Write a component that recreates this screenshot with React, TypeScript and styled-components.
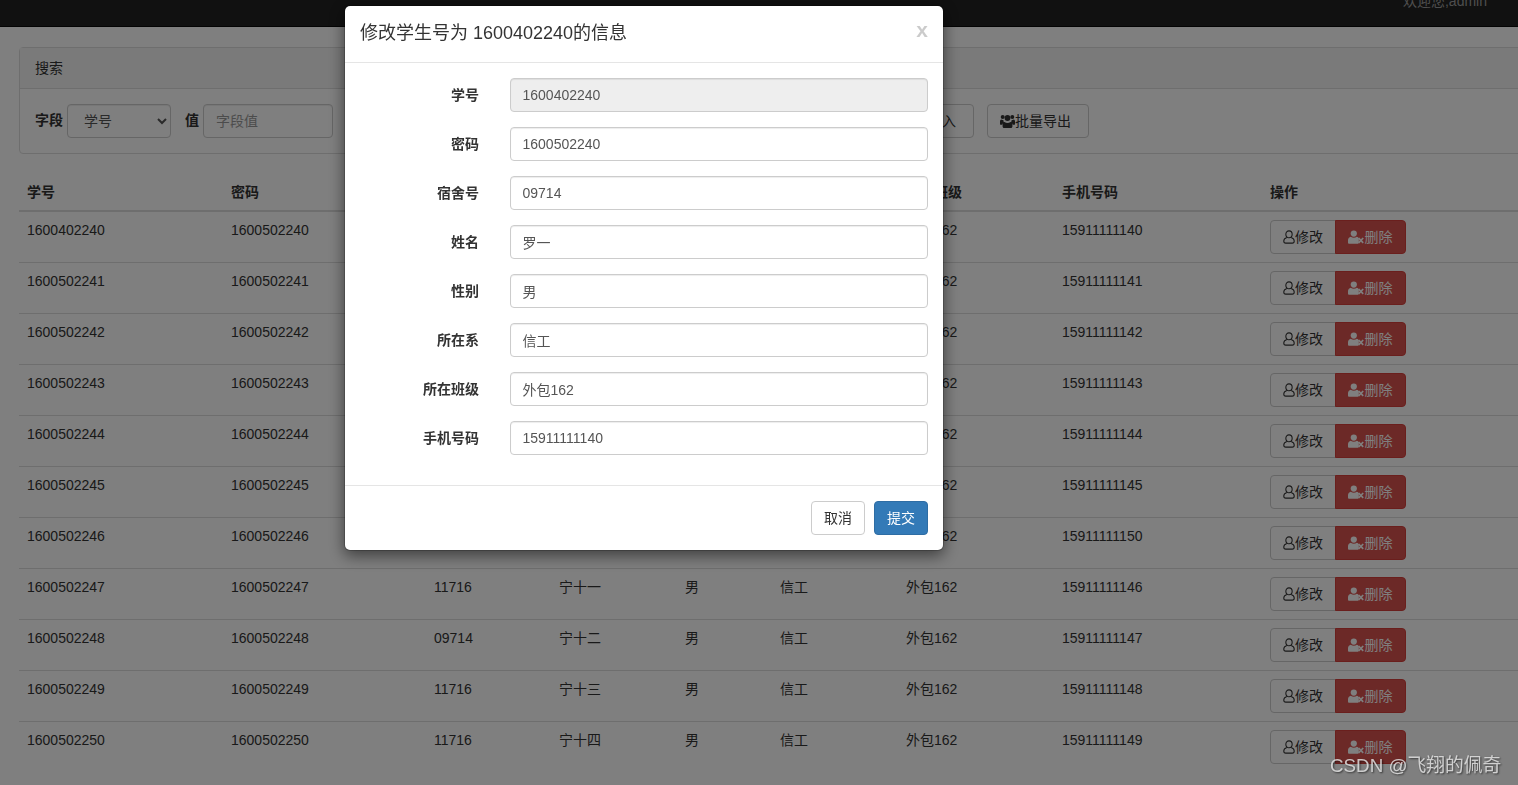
import React from "react";
import styled, { createGlobalStyle, css } from "styled-components";

const GlobalStyle = createGlobalStyle`
  html, body {
    margin: 0;
    height: 100%;
    overflow: hidden;
    background: #fff;
  }
  body {
    font-family: "Liberation Sans", "Noto Sans CJK SC", sans-serif;
    font-size: 14px;
    line-height: 20px;
    color: #333;
  }
  * {
    box-sizing: border-box;
  }
`;

const Navbar = styled.div`
  height: 27px;
  background: #222;
  border-bottom: 1px solid #080808;
  display: flex;
  justify-content: flex-end;
  padding-right: 31px;
  overflow: hidden;
`;

const Welcome = styled.span`
  color: #9d9d9d;
  margin-top: -9px;
  height: 20px;
`;

const Content = styled.div`
  margin: 20px -10px 0 19px;
`;

const Panel = styled.div`
  border: 1px solid #ddd;
  border-radius: 4px;
  margin-bottom: 20px;
`;

const PanelHeading = styled.div`
  background: #f5f5f5;
  border-bottom: 1px solid #ddd;
  padding: 10px 15px;
`;

const SearchForm = styled.form`
  display: flex;
  align-items: center;
  padding: 15px;
`;

const FieldLabel = styled.label`
  font-weight: 700;
  margin-right: 4px;
  margin-bottom: 2px;
`;

const controlStyle = css`
  height: 34px;
  padding: 6px 12px;
  font: inherit;
  color: #555;
  background: #fff;
  border: 1px solid #ccc;
  border-radius: 4px;
  box-shadow: inset 0 1px 1px rgba(0, 0, 0, 0.075);
  outline: none;
  &::placeholder {
    color: #999;
  }
`;

const FieldSelect = styled.select`
  ${controlStyle}
  width: 104px;
  margin-right: 14px;
`;

const FieldInput = styled.input`
  ${controlStyle}
  width: 130px;
`;

const Button = styled.button<{ $kind?: "default" | "primary" | "danger" }>`
  height: 34px;
  padding: 6px 12px;
  font: inherit;
  white-space: nowrap;
  display: inline-flex;
  align-items: center;
  border-radius: 4px;
  border: 1px solid
    ${(p) =>
      p.$kind === "primary" ? "#2e6da4" : p.$kind === "danger" ? "#d43f3a" : "#ccc"};
  background: ${(p) =>
    p.$kind === "primary" ? "#337ab7" : p.$kind === "danger" ? "#d9534f" : "#fff"};
  color: ${(p) => (p.$kind === "primary" || p.$kind === "danger" ? "#fff" : "#333")};
`;

const ToolButton = styled(Button)`
  margin-left: 13px;
`;

const BulkButton = styled(ToolButton)`
  padding-right: 17px;
`;

const ImportButton = styled(BulkButton)`
  margin-left: 472px;
`;

const ButtonGroup = styled.div`
  display: flex;
  ${Button}:first-child {
    border-radius: 4px 0 0 4px;
  }
  ${Button}:last-child {
    border-radius: 0 4px 4px 0;
    margin-left: -1px;
  }
`;

const Table = styled.table`
  width: 100%;
  table-layout: fixed;
  border-collapse: collapse;
`;

const Th = styled.th<{ $w: number }>`
  width: ${(p) => p.$w}px;
  padding: 8px;
  text-align: left;
  font-weight: 700;
  border-bottom: 2px solid #ddd;
`;

const Td = styled.td`
  padding: 8px;
  height: 50px;
  vertical-align: top;
  border-top: 1px solid #ddd;
  tbody tr:first-child & {
    border-top: 0;
  }
`;

const Backdrop = styled.div`
  position: fixed;
  inset: 0;
  background: rgba(0, 0, 0, 0.5);
`;

const Modal = styled.div`
  position: fixed;
  top: 5px;
  left: 344px;
  width: 600px;
  background: #fff;
  border: 1px solid rgba(0, 0, 0, 0.2);
  background-clip: padding-box;
  border-radius: 6px;
  box-shadow: 0 5px 15px rgba(0, 0, 0, 0.5);
`;

const ModalHeader = styled.div`
  display: flex;
  justify-content: space-between;
  align-items: flex-start;
  padding: 15px;
  border-bottom: 1px solid #e5e5e5;
`;

const ModalTitle = styled.h4`
  margin: 0;
  font-size: 18px;
  font-weight: 400;
  line-height: 25.7px;
`;

const CloseMark = styled.span`
  font-size: 21px;
  font-weight: 700;
  line-height: 20px;
  margin-top: -1px;
  color: #000;
  opacity: 0.2;
`;

const ModalBody = styled.div`
  padding: 15px;
  border-bottom: 1px solid #e5e5e5;
`;

const FormRow = styled.div`
  display: grid;
  grid-template-columns: 120px 1fr;
  column-gap: 30px;
  margin-bottom: 15px;
`;

const RowLabel = styled.label`
  font-weight: 700;
  text-align: right;
  padding: 7px 1px 0 0;
`;

const RowInput = styled.input`
  ${controlStyle}
  width: 100%;
  padding-left: 11.5px;
  &:read-only {
    background: #eee;
  }
`;

const ModalFooter = styled.div`
  display: flex;
  justify-content: flex-end;
  gap: 9px;
  padding: 15px;
`;

const Watermark = styled.div`
  position: fixed;
  left: 1330px;
  top: 753px;
  font-size: 18.8px;
  line-height: 26px;
  white-space: nowrap;
  color: rgba(235, 235, 235, 0.8);
  text-shadow: 1px 1px 2px rgba(0, 0, 0, 0.6);
`;

// outlined user, as in the edit button
const UserOutlineIcon = () => (
  <svg width="12" height="14" viewBox="0 0 12.5 14" fill="none" stroke="currentColor" strokeWidth="1.1">
    <ellipse cx="6.25" cy="4.2" rx="3.3" ry="3.6" />
    <path d="M4 7.4C2 8 .8 9.3.8 11.2c0 1.4.8 2.2 2 2.2h6.9c1.2 0 2-.8 2-2.2 0-1.9-1.2-3.2-3.2-3.8" />
  </svg>
);

// solid user with an x beside it, as in the delete button
const UserTimesIcon = () => (
  <svg width="16.5" height="14" viewBox="0 0 16.5 14" fill="currentColor">
    <circle cx="5.8" cy="3.6" r="3.1" />
    <path d="M2.8 6.8c.8.7 1.8 1 3 1s2.200-.3 3-1c1 .2 1.700.8 2 1.800v3.900c0 .8-.5 1.300-1.300 1.300H1.300C.5 13.800 0 13.300 0 12.500v-2.200c0-1.900 1.100-3.200 2.800-3.500z" />
    <path d="M10.600 8l4.600 4.900M15.200 8l-4.600 4.900" stroke="currentColor" strokeWidth="1.700" fill="none" />
  </svg>
);

// three people, as in the bulk buttons
const UsersIcon = () => (
  <svg width="15" height="14" viewBox="0 0 15 14" fill="currentColor">
    <circle cx="2.700" cy="3" r="2" />
    <circle cx="12.300" cy="3" r="2" />
    <circle cx="7.500" cy="4" r="2.900" />
    <path d="M1 5.600c.5.300 1 .5 1.700.5.300 0 .5 0 .7-.1-.1 1 .3 1.900 1 2.500C3 9 2.400 10 2.300 10.800H.8C.3 10.800 0 10.500 0 9.900V7.300c0-.8.400-1.400 1-1.700z" />
    <path d="M14 5.600c-.5.300-1 .5-1.700.5-.3 0-.5 0-.7-.1.100 1-.3 1.900-1 2.500 1.400.5 2 1.500 2.100 2.300h1.500c.5 0 .8-.3.8-.9V7.300c0-.8-.4-1.400-1-1.700z" />
    <path d="M4.600 7.900c.8.600 1.800 1 2.900 1s2.100-.4 2.900-1c1.300.3 2 1.400 2 2.900v1.700c0 .9-.6 1.500-1.500 1.500H4.100c-.9 0-1.500-.6-1.500-1.500v-1.700c0-1.500.7-2.600 2-2.900z" />
  </svg>
);

const columns: [string, number][] = [
  ["学号", 204],
  ["密码", 203],
  ["宿舍号", 125],
  ["姓名", 126],
  ["性别", 95],
  ["所在系", 126],
  ["所在班级", 156],
  ["手机号码", 208],
  ["操作", 266],
];

const students = [
  ["1600402240", "1600502240", "09714", "罗一", "15911111140"],
  ["1600502241", "1600502241", "11716", "宁五", "15911111141"],
  ["1600502242", "1600502242", "11716", "宁六", "15911111142"],
  ["1600502243", "1600502243", "11716", "宁七", "15911111143"],
  ["1600502244", "1600502244", "11716", "宁八", "15911111144"],
  ["1600502245", "1600502245", "11716", "宁九", "15911111145"],
  ["1600502246", "1600502246", "11716", "宁十", "15911111150"],
  ["1600502247", "1600502247", "11716", "宁十一", "15911111146"],
  ["1600502248", "1600502248", "09714", "宁十二", "15911111147"],
  ["1600502249", "1600502249", "11716", "宁十三", "15911111148"],
  ["1600502250", "1600502250", "11716", "宁十四", "15911111149"],
];

const formFields = [
  ["学号", "1600402240"],
  ["密码", "1600502240"],
  ["宿舍号", "09714"],
  ["姓名", "罗一"],
  ["性别", "男"],
  ["所在系", "信工"],
  ["所在班级", "外包162"],
  ["手机号码", "15911111140"],
];

export default function App() {
  return (
    <>
      <GlobalStyle />
      <Navbar>
        <Welcome>欢迎您,admin</Welcome>
      </Navbar>
      <Content>
        <Panel>
          <PanelHeading>搜索</PanelHeading>
          <SearchForm>
            <FieldLabel>字段</FieldLabel>
            <FieldSelect defaultValue="学号">
              <option>学号</option>
              <option>姓名</option>
            </FieldSelect>
            <FieldLabel>值</FieldLabel>
            <FieldInput placeholder="字段值" />
            <ToolButton type="button">搜索</ToolButton>
            <ImportButton type="button">
              <UsersIcon />
              批量导入
            </ImportButton>
            <BulkButton type="button">
              <UsersIcon />
              批量导出
            </BulkButton>
          </SearchForm>
        </Panel>
        <Table>
          <thead>
            <tr>
              {columns.map(([name, w]) => (
                <Th key={name} $w={w}>
                  {name}
                </Th>
              ))}
            </tr>
          </thead>
          <tbody>
            {students.map(([id, pwd, dorm, name, phone]) => (
              <tr key={id}>
                <Td>{id}</Td>
                <Td>{pwd}</Td>
                <Td>{dorm}</Td>
                <Td>{name}</Td>
                <Td>男</Td>
                <Td>信工</Td>
                <Td>外包162</Td>
                <Td>{phone}</Td>
                <Td>
                  <ButtonGroup>
                    <Button type="button">
                      <UserOutlineIcon />
                      修改
                    </Button>
                    <Button type="button" $kind="danger">
                      <UserTimesIcon />
                      删除
                    </Button>
                  </ButtonGroup>
                </Td>
              </tr>
            ))}
          </tbody>
        </Table>
      </Content>
      <Backdrop />
      <Modal>
        <ModalHeader>
          <ModalTitle>修改学生号为 1600402240的信息</ModalTitle>
          <CloseMark>x</CloseMark>
        </ModalHeader>
        <ModalBody>
          {formFields.map(([label, value], i) => (
            <FormRow key={label}>
              <RowLabel>{label}</RowLabel>
              <RowInput defaultValue={value} readOnly={i === 0} />
            </FormRow>
          ))}
        </ModalBody>
        <ModalFooter>
          <Button type="button">取消</Button>
          <Button type="button" $kind="primary">
            提交
          </Button>
        </ModalFooter>
      </Modal>
      <Watermark>CSDN @飞翔的佩奇</Watermark>
    </>
  );
}
